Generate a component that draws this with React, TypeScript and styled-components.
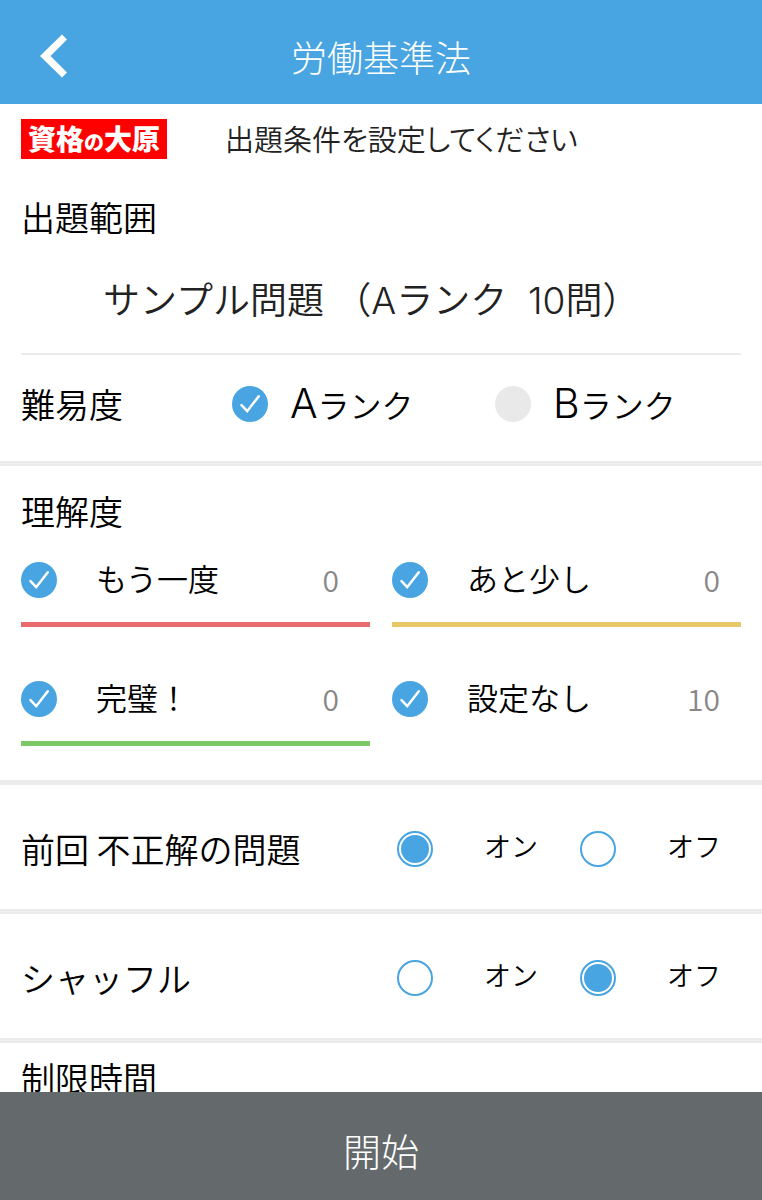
import React, { useState } from "react";
import styled, { createGlobalStyle } from "styled-components";

const color = {
  blue: "#49a5e1",
  line: "#ebebeb",
  slate: "#64696c",
  red: "#e86c6f",
  yellow: "#e8c766",
  green: "#7cc766",
};

const GlobalStyle = createGlobalStyle`
  *, *::before, *::after { box-sizing: border-box; }
  body {
    margin: 0;
    background: #fff;
    color: #000;
    font-family: "Noto Sans CJK JP", sans-serif;
    font-weight: 350;
  }
  h1, h2, p { margin: 0; font-weight: inherit; }
  button, input { font: inherit; margin: 0; }
`;

const Screen = styled.div`
  display: grid;
  grid-template-rows: auto minmax(0, 1fr) auto;
  height: 100vh;
`;

const TopBar = styled.header`
  display: grid;
  grid-template-columns: 104px 1fr 104px;
  align-items: center;
  height: 104px;
  padding-top: 8px;
  background: ${color.blue};
  color: #fff;
`;

const BackButton = styled.button`
  display: flex;
  padding: 0 0 0 40px;
  border: 0;
  background: none;
  color: inherit;
  cursor: pointer;
`;

const Title = styled.h1`
  font-size: 36px;
  font-weight: 300;
  line-height: 52px;
  text-align: center;
`;

const Content = styled.main`
  overflow-y: auto;
  scrollbar-width: none;
`;

const Section = styled.section<{ $divided?: boolean }>`
  padding: 0 21px;
  border-bottom: ${(p) => (p.$divided ? `5px solid ${color.line}` : "0")};
`;

const Intro = styled.div`
  display: flex;
  align-items: flex-start;
  gap: 58px;
  padding: 15px 0 32px;
`;

const Logo = styled.div`
  display: flex;
  align-items: baseline;
  justify-content: center;
  width: 146px;
  height: 40px;
  background: #fe0000;
  color: #fff;
  font-size: 28px;
  font-weight: 900;
  line-height: 38px;
`;

const LogoSmall = styled.span`
  font-size: 20px;
`;

const Prompt = styled.p`
  color: #222;
  font-size: 29px;
  line-height: 38px;
  font-feature-settings: "palt";
`;

const Heading = styled.h2`
  font-size: 34px;
  line-height: 52px;
`;

const Range = styled.p`
  padding-left: 82px;
  border-bottom: 2px solid ${color.line};
  color: #222;
  font-size: 37px;
  line-height: 110px;
`;

const Latin = styled.span<{ $large?: boolean }>`
  font-family: Inter, sans-serif;
  font-size: ${(p) => (p.$large ? "41px" : "37px")};
  font-weight: 300;
  line-height: 0;
`;

const RankRow = styled.div`
  display: grid;
  grid-template-columns: 211fr 263fr 246fr;
  align-items: center;
  height: 106px;
  padding-bottom: 8px;
`;

const RankOption = styled.label`
  display: flex;
  align-items: center;
  gap: 22px;
  font-size: 32px;
  line-height: 52px;
  white-space: nowrap;
`;

const LevelGrid = styled.div`
  display: grid;
  grid-template-columns: 1fr 1fr;
  gap: 29px 22px;
  padding-bottom: 34px;
`;

const Level = styled.label<{ $accent: string }>`
  display: flex;
  align-items: center;
  height: 90px;
  padding-right: 21px;
  border-bottom: 5px solid ${(p) => p.$accent};
  &:nth-child(odd) { padding-right: 31px; }
`;

const LevelName = styled.span`
  flex: 1;
  padding: 0 0 4px 39px;
  font-size: 31px;
  line-height: 48px;
`;

const Count = styled.span`
  padding-bottom: 2px;
  color: #888;
  font-size: 30px;
  line-height: 48px;
`;

const UnderstandingSection = styled(Section)`
  padding-top: 19px;
`;

const SwitchRow = styled.div`
  display: grid;
  grid-template-columns: 376fr 183fr 161fr;
  align-items: center;
  height: 124px;
  padding-top: 4px;
`;

const SwitchOption = styled.label`
  display: flex;
  align-items: center;
  gap: 51px;
  font-size: 27px;
  line-height: 36px;
  white-space: nowrap;
`;

const SwitchName = styled.span`
  padding-bottom: 6px;
`;

const LimitSection = styled(Section)`
  padding-top: 9px;
  padding-bottom: 80px;
`;

const TickBox = styled.span`
  display: grid;
  flex: none;
  width: 36px;
  height: 36px;
  & > * { grid-area: 1 / 1; }
  svg { pointer-events: none; }
`;

const TickInput = styled.input`
  appearance: none;
  width: 36px;
  height: 36px;
  border-radius: 50%;
  background: #e9e9e9;
  cursor: pointer;
  &:checked { background: ${color.blue}; }
  & + svg { visibility: hidden; }
  &:checked + svg { visibility: visible; }
`;

const RadioInput = styled.input`
  appearance: none;
  flex: none;
  width: 36px;
  height: 36px;
  padding: 2px;
  border: 2px solid ${color.blue};
  border-radius: 50%;
  cursor: pointer;
  &:checked { background: ${color.blue} content-box; }
`;

const StartButton = styled.button`
  height: 108px;
  padding: 8px 0 0;
  border: 0;
  background: ${color.slate};
  color: #fff;
  font-size: 38px;
  font-weight: 300;
  line-height: 56px;
  cursor: pointer;
`;

function Tick({ initial }: { initial: boolean }) {
  return (
    <TickBox>
      <TickInput type="checkbox" defaultChecked={initial} />
      <svg width="36" height="36" viewBox="0 0 36 36" fill="none" aria-hidden="true">
        <path
          d="M9.5 19.2 15.2 25.2 26.8 10.2"
          stroke="#fff"
          strokeWidth="2.5"
          strokeLinecap="round"
        />
      </svg>
    </TickBox>
  );
}

function OnOff({ name, title, initial }: { name: string; title: string; initial: boolean }) {
  const [on, setOn] = useState(initial);
  return (
    <Section $divided>
      <SwitchRow role="radiogroup" aria-label={title}>
        <Heading>{title}</Heading>
        <SwitchOption>
          <RadioInput type="radio" name={name} checked={on} onChange={() => setOn(true)} />
          <SwitchName>オン</SwitchName>
        </SwitchOption>
        <SwitchOption>
          <RadioInput type="radio" name={name} checked={!on} onChange={() => setOn(false)} />
          <SwitchName>オフ</SwitchName>
        </SwitchOption>
      </SwitchRow>
    </Section>
  );
}

const levels = [
  { name: "もう一度", count: 0, accent: color.red },
  { name: "あと少し", count: 0, accent: color.yellow },
  { name: "完璧！", count: 0, accent: color.green },
  { name: "設定なし", count: 10, accent: "transparent" },
];

const ranks = [
  { letter: "A", checked: true },
  { letter: "B", checked: false },
];

export default function App() {
  return (
    <Screen>
      <GlobalStyle />
      <TopBar>
        <BackButton type="button" aria-label="戻る">
          <svg width="28" height="44" viewBox="0 0 28 44" aria-hidden="true">
            <path d="M22 .5 27 5.5 10.5 22 27 38.5 22 43.5 0 22Z" fill="currentColor" />
          </svg>
        </BackButton>
        <Title>労働基準法</Title>
      </TopBar>

      <Content>
        <Section $divided>
          <Intro>
            <Logo>
              <span>資格</span>
              <LogoSmall>の</LogoSmall>
              <span>大原</span>
            </Logo>
            <Prompt>出題条件を設定してください</Prompt>
          </Intro>
          <Heading>出題範囲</Heading>
          <Range>
            サンプル問題<Latin> </Latin>（<Latin>A</Latin>ランク<Latin>&nbsp; 10</Latin>問）
          </Range>
          <RankRow>
            <Heading>難易度</Heading>
            {ranks.map((rank) => (
              <RankOption key={rank.letter}>
                <Tick initial={rank.checked} />
                <span>
                  <Latin $large>{rank.letter}</Latin>ランク
                </span>
              </RankOption>
            ))}
          </RankRow>
        </Section>

        <UnderstandingSection $divided>
          <Heading>理解度</Heading>
          <LevelGrid>
            {levels.map((level) => (
              <Level key={level.name} $accent={level.accent}>
                <Tick initial />
                <LevelName>{level.name}</LevelName>
                <Count>{level.count}</Count>
              </Level>
            ))}
          </LevelGrid>
        </UnderstandingSection>

        <OnOff name="missed" title="前回 不正解の問題" initial={true} />
        <OnOff name="shuffle" title="シャッフル" initial={false} />

        <LimitSection>
          <Heading>制限時間</Heading>
        </LimitSection>
      </Content>

      <StartButton type="button">開始</StartButton>
    </Screen>
  );
}
